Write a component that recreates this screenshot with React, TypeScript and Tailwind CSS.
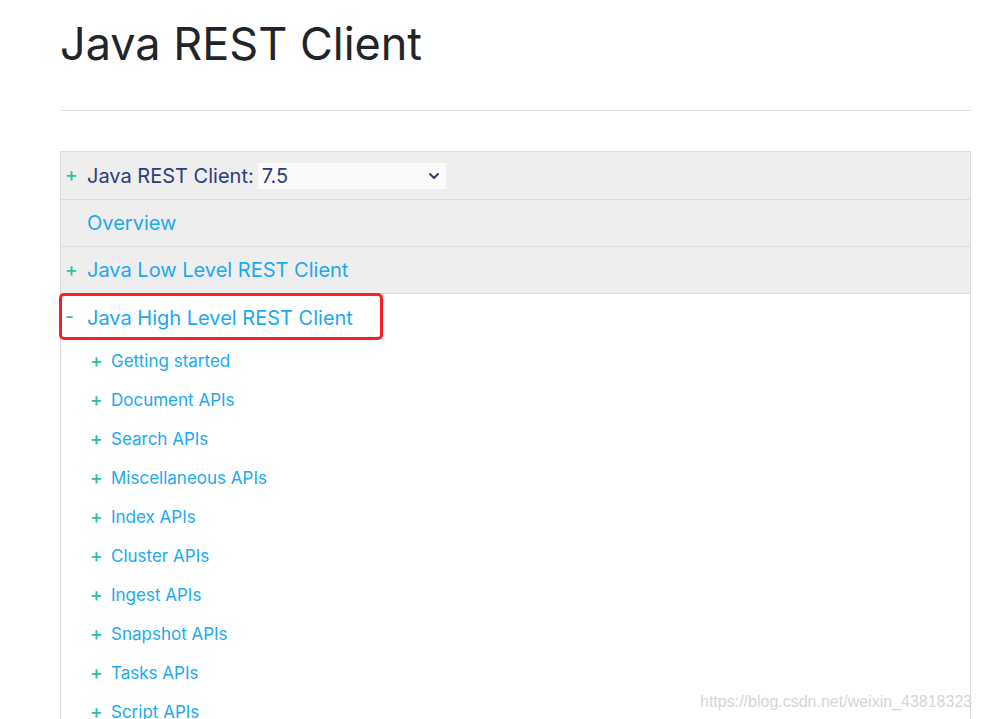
import { ChevronDown } from 'lucide-react'

const subItems = [
  'Getting started',
  'Document APIs',
  'Search APIs',
  'Miscellaneous APIs',
  'Index APIs',
  'Cluster APIs',
  'Ingest APIs',
  'Snapshot APIs',
  'Tasks APIs',
  'Script APIs',
]

function Toggle({ sign }: { sign: string }) {
  return <span className="w-[26px] pl-[4px] text-[#2bbfa8] text-[19px] font-medium">{sign}</span>
}

export default function App() {
  return (
    <div className="bg-white font-['Inter',sans-serif] overflow-hidden h-[719px] relative">
      <div className="ml-[60px] mr-[9px]">
        <h1 className="pt-[15px] text-[45px] leading-[58px] text-[#212529]">
          Java REST Client
        </h1>
        <hr className="mt-[37px] border-t border-[#e3e3e3]" />

        <div className="mt-[40px] border border-[#dcdcdc] border-b-0 mr-[1px]">
          <div className="flex items-center h-[48px] bg-[#eeeeee] border-b border-[#dcdcdc]">
            <Toggle sign="+" />
            <span className="text-[20px] text-[#2f3b7c]">Java REST Client:</span>
            <div className="ml-[4px] flex items-center justify-between w-[188px] h-[26px] bg-[#fafafa] pl-[4px] pr-[4px]">
              <span className="text-[20px] text-[#2f3b7c]">7.5</span>
              <ChevronDown className="w-[16px] h-[16px] text-[#2f3b7c]" strokeWidth={3} />
            </div>
          </div>
          <div className="flex items-center h-[47px] bg-[#eeeeee] border-b border-[#dcdcdc]">
            <span className="w-[26px]" />
            <span className="text-[20px] text-[#1ba9f5]">Overview</span>
          </div>
          <div className="flex items-center h-[47px] bg-[#eeeeee] border-b border-[#dcdcdc]">
            <Toggle sign="+" />
            <span className="text-[20px] text-[#1ba9f5]">Java Low Level REST Client</span>
          </div>
          <div className="relative flex items-center h-[47px]">
            <div className="absolute left-[-2px] top-[-1px] w-[324px] h-[47px] border-[3px] border-[#fb2020] rounded-[5px]" />
            <Toggle sign="-" />
            <span className="text-[20px] text-[#1ba9f5]">Java High Level REST Client</span>
          </div>
          <div className="pt-[1px]">
            {subItems.map((item) => (
              <div key={item} className="flex items-center h-[39px]">
                <span className="w-[50px] pl-[29px] text-[#2bbfa8] text-[19px] font-medium">+</span>
                <span className="text-[17px] text-[#1ba9f5]">{item}</span>
              </div>
            ))}
          </div>
        </div>
      </div>
      <div className="absolute left-[700px] top-[690px] text-[16px] text-[#d6d6d6] font-['Liberation_Sans',sans-serif]">
        https://blog.csdn.net/weixin_43818323
      </div>
    </div>
  )
}
